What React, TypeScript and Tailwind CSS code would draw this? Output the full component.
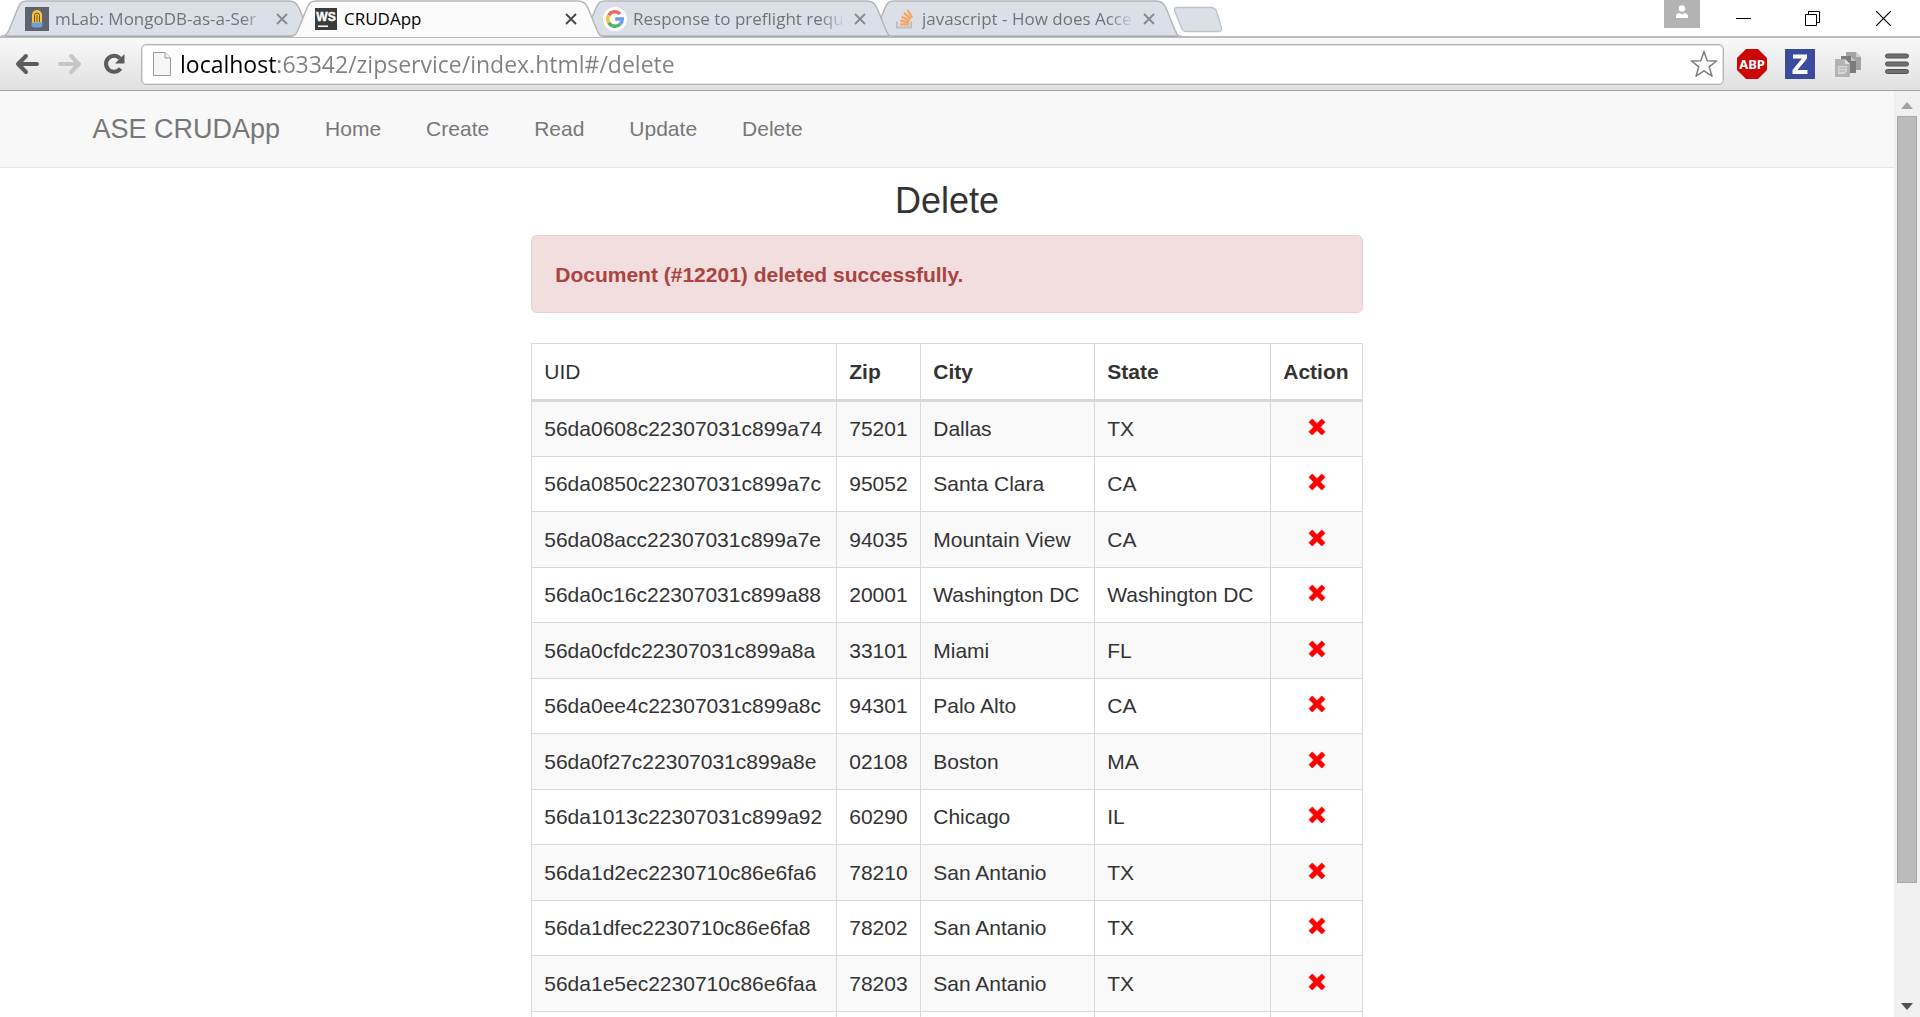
import type { ReactNode } from "react";

type Doc = { uid: string; zip: string; city: string; state: string };

const docs: Doc[] = [
  { uid: "56da0608c22307031c899a74", zip: "75201", city: "Dallas", state: "TX" },
  { uid: "56da0850c22307031c899a7c", zip: "95052", city: "Santa Clara", state: "CA" },
  { uid: "56da08acc22307031c899a7e", zip: "94035", city: "Mountain View", state: "CA" },
  { uid: "56da0c16c22307031c899a88", zip: "20001", city: "Washington DC", state: "Washington DC" },
  { uid: "56da0cfdc22307031c899a8a", zip: "33101", city: "Miami", state: "FL" },
  { uid: "56da0ee4c22307031c899a8c", zip: "94301", city: "Palo Alto", state: "CA" },
  { uid: "56da0f27c22307031c899a8e", zip: "02108", city: "Boston", state: "MA" },
  { uid: "56da1013c22307031c899a92", zip: "60290", city: "Chicago", state: "IL" },
  { uid: "56da1d2ec2230710c86e6fa6", zip: "78210", city: "San Antanio", state: "TX" },
  { uid: "56da1dfec2230710c86e6fa8", zip: "78202", city: "San Antanio", state: "TX" },
  { uid: "56da1e5ec2230710c86e6faa", zip: "78203", city: "San Antanio", state: "TX" },
];

const MLabIcon = () => (
  <svg width="24" height="24" viewBox="0 0 24 24">
    <rect width="24" height="24" fill="#5d646e" />
    <path d="M7 16V8a5 5 0 0 1 10 0v8z" fill="#fbc43a" />
    <path d="M9.500 15V8.500a2.500 2.500 0 0 1 5 0V15M12 8v7" fill="none" stroke="#5d4a2c" strokeWidth="1" />
    <path d="M6.500 15.500h11v3.500l-2 1.500h-7l-2-1.500z" fill="#6ba3d6" />
  </svg>
);

const WebStormIcon = () => (
  <svg width="24" height="22" viewBox="-1 0 24 22">
    <rect width="22" height="22" fill="#3b3b3b" />
    <text x="11" y="13" textAnchor="middle" fontSize="12" fontWeight="700" fill="#fff" stroke="#fff" strokeWidth=".4" className="font-['Liberation_Sans',sans-serif]">WS</text>
    <rect x="3" y="17.500" width="10" height="1.500" fill="#fff" />
  </svg>
);

const GoogleIcon = () => (
  <svg width="24" height="24" viewBox="0 0 24 24">
    <circle cx="12" cy="12" r="12" fill="#fff" />
    <g fill="none" strokeWidth="3.400">
      <path d="M5.700 8.300A7.300 7.300 0 0 1 17.200 6.900" stroke="#ee6a5f" />
      <path d="M5.700 15.700a7.300 7.300 0 0 1 0-7.400" stroke="#fbc43a" />
      <path d="M17 17.300A7.300 7.300 0 0 1 5.700 15.700" stroke="#52b36c" />
      <path d="M12.200 12h7.100a7.300 7.300 0 0 1-2.300 5.300" stroke="#6a9cf5" />
    </g>
  </svg>
);

const StackIcon = () => (
  <svg width="24" height="24" viewBox="0 0 24 24">
    <path d="M5 14.500v6h14v-6" fill="none" stroke="#bdbfc2" strokeWidth="2" />
    <g stroke="#f9a35b" strokeWidth="2.200">
      <path d="M8 17.300h9M8.200 13.700l8.800 1.700M9.500 9.700l8 3.900M12 5.900l6.600 6M15.500 3l4.700 7.600" />
    </g>
  </svg>
);

function Tab({ title, icon, active, layer }: { title: string; icon: ReactNode; active?: boolean; layer: string }) {
  return (
    <div className={`relative flex h-[37px] w-[314px] shrink items-center pr-[23px] pl-[23px] not-first:-ml-[25px] ${layer}`}>
      <svg className="absolute inset-0 h-full w-full" viewBox="0 0 314 37" preserveAspectRatio="none">
        <path
          d="M0 37C4 37 6 35 8 30L17 8C19 3 21 1 26 1H288C293 1 296 3 298 8L307 30C309 35 310 37 314 37Z"
          fill={active ? "#fbfbfb" : "#dbe0e8"}
        />
        <path
          d="M0 36.500C4 36 6 35 8 30L17 8C19 3 21 1 26 1H288C293 1 296 3 298 8L307 30C309 35 310 36 314 36.500"
          fill="none"
          stroke="#b4b6b9"
          strokeWidth="1.500"
        />
        {!active && <path d="M4 36.300H310" stroke="#a6a8ab" strokeWidth="1.500" />}
      </svg>
      <span className="relative flex w-[31px] shrink-0 pl-px">{icon}</span>
      <span
        className={`relative min-w-0 flex-1 overflow-hidden text-[17px] leading-6 whitespace-nowrap ${active ? "text-black" : "text-[#70747a] [mask-image:linear-gradient(to_right,black_88%,transparent)]"}`}
      >
        {title}
      </span>
      <button aria-label={`Close ${title}`} className="relative ml-1 flex size-5 items-center justify-center">
        <svg width="12" height="12" viewBox="0 0 12 12" stroke={active ? "#444" : "#85888c"} strokeWidth="1.800">
          <path d="M1 1l10 10M11 1L1 11" />
        </svg>
      </button>
    </div>
  );
}

function TabStrip() {
  return (
    <header className="flex h-[37px] items-start">
      <div className="flex min-w-0 flex-1 items-start pl-px">
        <Tab title="mLab: MongoDB-as-a-Ser" icon={<MLabIcon />} layer="z-10" />
        <Tab title="CRUDApp" icon={<WebStormIcon />} active layer="z-30" />
        <Tab title="Response to preflight requ" icon={<GoogleIcon />} layer="z-20" />
        <Tab title="javascript - How does Acce" icon={<StackIcon />} layer="z-10" />
        <button aria-label="New tab" className="-ml-[9px] mt-[6px] shrink-0">
          <svg width="50" height="27" viewBox="0 0 50 27">
            <path
              d="M4 1.500H38C41 1.500 42.500 3 43.500 5L48.500 22C49 24.500 48 25.500 46 25.500H14C11 25.500 9.500 24.500 8.500 22L1.500 4.500C1 2.500 2 1.500 4 1.500Z"
              fill="#dbe0e8"
              stroke="#c0c2c6"
              strokeWidth="1.300"
            />
          </svg>
        </button>
      </div>
      <div className="flex items-start pr-[29px]">
        <button aria-label="Profile" className="mr-9 flex h-7 w-9 items-center justify-center bg-[#b3b3b3]">
          <svg width="14" height="14" viewBox="0 0 14 14" fill="#fff" className="-mt-1">
            <circle cx="7" cy="3.500" r="3.200" />
            <path d="M1 13v-2c0-2 2-3 3.500-3L7 9.500 9.500 8C11 8 13 9 13 11v2z" />
          </svg>
        </button>
        <button aria-label="Minimize" className="mr-[54px] flex h-[37px] items-center">
          <svg width="15" height="15" viewBox="0 0 15 15" stroke="#000">
            <path d="M0 7.500h15" />
          </svg>
        </button>
        <button aria-label="Restore" className="mr-14 flex h-[37px] items-center">
          <svg width="15" height="15" viewBox="0 0 15 15" stroke="#000" fill="none">
            <path d="M.5 3.500h11v11H.5zM3.500 3.500v-3h11v11h-3" />
          </svg>
        </button>
        <button aria-label="Close window" className="flex h-[37px] items-center">
          <svg width="15" height="15" viewBox="0 0 15 15" stroke="#000" strokeWidth="1.200">
            <path d="M0 0l15 15M15 0L0 15" />
          </svg>
        </button>
      </div>
    </header>
  );
}

function Toolbar() {
  return (
    <div className="flex h-[55px] items-center border-t-2 border-b border-t-[#bcbcbc] border-b-[#a3a3a3] bg-linear-to-b from-[#f9f9f9] to-[#e0e0e0] pr-[10px] pl-[15px]">
      <button aria-label="Back" className="mr-[17px]">
        <svg width="25" height="22" viewBox="0 0 25 22" fill="none" stroke="#5c5c5c" strokeWidth="4" strokeLinecap="round" strokeLinejoin="round">
          <path d="M22 11H4M11 3L3 11l8 8" />
        </svg>
      </button>
      <button aria-label="Forward" className="mr-[21px]">
        <svg width="25" height="22" viewBox="0 0 25 22" fill="none" stroke="#c6c6c6" strokeWidth="4" strokeLinecap="round" strokeLinejoin="round">
          <path d="M3 11h18M14 3l8 8-8 8" />
        </svg>
      </button>
      <button aria-label="Reload" className="mr-4">
        <svg width="22" height="22" viewBox="0 0 22 22">
          <path d="M17.500 15.500A8 8 0 1 1 17 5.500" fill="none" stroke="#5c5c5c" strokeWidth="4" />
          <path d="M21.500 1v9.500H12z" fill="#5c5c5c" />
        </svg>
      </button>
      <div className="flex h-[41px] flex-1 items-center rounded-[5px] border border-[#b5b5b5] bg-white pr-[5px] pl-[11px] shadow-[inset_0_0_0_1px_#e2e2e2]">
        <svg width="18" height="24" viewBox="0 0 18 24" fill="#f6f6f6" stroke="#999" className="shrink-0">
          <path d="M.5.5h11.500l5.500 5.500v17.500H.5z" />
          <path d="M12 .5V6h5.500" />
        </svg>
        <input
          aria-label="Address"
          defaultValue="localhost:63342/zipservice/index.html#/delete"
          className="ml-[9px] h-9 min-w-0 flex-1 bg-linear-to-r from-black from-[96px] to-[#808080] to-[96px] bg-clip-text text-[23px] text-transparent outline-none"
        />
        <button aria-label="Bookmark">
          <svg width="28" height="28" viewBox="0 0 28 28" fill="#fff" stroke="#7d7d7d" strokeWidth="1.500" strokeLinejoin="round">
            <path d="M14 1.500l3.200 9.200 9.300.3-7.300 5.900 2.800 9.300-8-5.400-8 5.400 2.800-9.300L1.500 11l9.300-.3z" />
          </svg>
        </button>
      </div>
      <button aria-label="Adblock Plus" className="ml-[13px]">
        <svg width="30" height="30" viewBox="0 0 30 30">
          <path d="M9 0h12l9 9v12l-9 9H9l-9-9V9z" fill="#cb0606" />
          <text x="15" y="20" textAnchor="middle" fontSize="13" fontWeight="700" fill="#fff" className="font-['Noto_Sans',sans-serif]">ABP</text>
        </svg>
      </button>
      <button aria-label="Zotero" className="ml-[18px]">
        <svg width="30" height="30" viewBox="0 0 30 30">
          <rect width="30" height="30" fill="#3b4ba0" />
          <path d="M8 5.500h14v4L12.500 21H22.500v4H7.500v-4L17 9.500H8z" fill="#fff" />
        </svg>
      </button>
      <button aria-label="Pages" className="ml-5">
        <svg width="27" height="27" viewBox="0 0 27 27">
          <path d="M11 1h10l5 5v13H11z" fill="#a3a3a3" />
          <path d="M21 1v5h5z" fill="#d0d0d0" />
          <path d="M6 5h10l5 5v12H6z" fill="#7b7b7b" />
          <path d="M16 5v5h5z" fill="#c4c4c4" />
          <path d="M0 8h10l5 5v13H0z" fill="#b3b3b3" />
          <path d="M10 8v5h5z" fill="#e0e0e0" />
          <path d="M3 15h9v6l-3 2H3z" fill="#d6d6d6" />
          <path d="M4 17h7M4 20h6" stroke="#aaa" />
        </svg>
      </button>
      <button aria-label="Menu" className="ml-[23px]">
        <svg width="25" height="22" viewBox="0 0 25 22" fill="#707070" stroke="#505050">
          <rect x=".5" y="1" width="23" height="4" rx="2" />
          <rect x=".5" y="9" width="23" height="4" rx="2" />
          <rect x=".5" y="16.500" width="23" height="4" rx="2" />
        </svg>
      </button>
    </div>
  );
}

function Navbar() {
  return (
    <nav className="border-b border-[#e7e7e7] bg-[#f8f8f8]">
      <div className="mx-auto flex h-[76px] max-w-[1755px] items-center gap-[45px] px-[23px] text-[21px] text-[#777]">
        <a href="#/" className="text-[27px]">ASE CRUDApp</a>
        <a href="#/home">Home</a>
        <a href="#/create">Create</a>
        <a href="#/read">Read</a>
        <a href="#/update">Update</a>
        <a href="#/delete">Delete</a>
      </div>
    </nav>
  );
}

const cell = "border border-[#d9d9d9] px-3 whitespace-nowrap";

function DocumentTable() {
  return (
    <table className="mt-[30px] w-full border-collapse text-left">
      <thead>
        <tr className="h-[57px]">
          <th className={`${cell} w-[305px] border-b-3 font-normal`}>UID</th>
          <th className={`${cell} w-[84px] border-b-3`}>Zip</th>
          <th className={`${cell} w-[174px] border-b-3`}>City</th>
          <th className={`${cell} w-[176px] border-b-3`}>State</th>
          <th className={`${cell} border-b-3`}>Action</th>
        </tr>
      </thead>
      <tbody>
        {docs.map((d) => (
          <tr key={d.uid} className="odd:h-14 odd:bg-[#f9f9f9] even:h-[55px]">
            <td className={cell}>{d.uid}</td>
            <td className={cell}>{d.zip}</td>
            <td className={cell}>{d.city}</td>
            <td className={cell}>{d.state}</td>
            <td className={`${cell} text-center`}>
              <button aria-label={`Delete ${d.uid}`} className="inline-flex">
                <svg width="18" height="18" viewBox="0 0 18 18" fill="#f00">
                  <path d="M4.300 1L9 5.700 13.700 1 17 4.300 12.300 9 17 13.700 13.700 17 9 12.300 4.300 17 1 13.700 5.700 9 1 4.300z" stroke="#f00" strokeWidth=".8" strokeLinejoin="round" />
                </svg>
              </button>
            </td>
          </tr>
        ))}
        <tr className="h-[55px]">
          <td className={cell} />
          <td className={cell} />
          <td className={cell} />
          <td className={cell} />
          <td className={cell} />
        </tr>
      </tbody>
    </table>
  );
}

function Scrollbar() {
  return (
    <div className="flex w-[26px] shrink-0 flex-col bg-[#f0f0f0]">
      <button aria-label="Scroll up" className="flex h-[25px] items-center justify-center">
        <svg width="12" height="7" viewBox="0 0 12 7" fill="#a3a3a3" className="mt-1">
          <path d="M0 7l6-7 6 7z" />
        </svg>
      </button>
      <div className="min-h-0 flex-1 px-[3px]">
        <div className="h-7/8 border border-[#a8a8a8] bg-[#bbb]" />
      </div>
      <button aria-label="Scroll down" className="flex h-[25px] items-center justify-center">
        <svg width="12" height="7" viewBox="0 0 12 7" fill="#505050" className="mt-1">
          <path d="M0 0l6 7 6-7z" />
        </svg>
      </button>
    </div>
  );
}

export default function App() {
  return (
    <div className="flex h-screen flex-col overflow-hidden bg-white font-['Open_Sans',sans-serif]">
      <TabStrip />
      <div className="-mt-px">
        <Toolbar />
      </div>
      <div className="flex min-h-0 flex-1 font-['Liberation_Sans',Arial,sans-serif]">
        <div className="min-w-0 flex-1 overflow-hidden">
          <Navbar />
          <main className="mx-auto max-w-[1755px] text-[21px] leading-[30px] text-[#333]">
            <div className="mx-auto w-1/2 px-[23px]">
              <h3 className="pt-[13px] pb-[14px] text-center text-[36px] leading-10">Delete</h3>
              <div role="alert" className="rounded-md border border-[#ebccd1] bg-[#f2dede] px-[23px] pt-6 pb-[22px] font-bold text-[#a94442]">
                Document (#12201) deleted successfully.
              </div>
              <DocumentTable />
            </div>
          </main>
        </div>
        <Scrollbar />
      </div>
    </div>
  );
}
